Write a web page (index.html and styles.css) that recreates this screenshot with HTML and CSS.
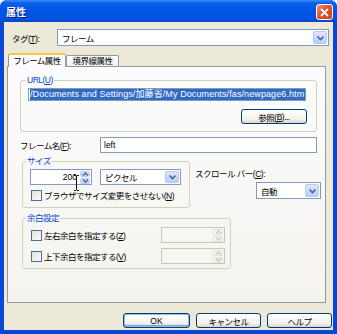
FILE: index.html
```html
<!DOCTYPE HTML>
<html>
	<head>
		<meta charset="utf-8">
		<title>属性</title>
		<link rel="stylesheet" href="styles.css">
	</head>
	<body>
		<div class="window">
			<div class="titlebar">
				<span class="title">属性</span>
				<span class="close">
					<svg width="9" height="9" viewBox="0 0 9 9"><path d="M1 1L8 8M8 1L1 8" stroke="#fff" stroke-width="1.8"/></svg>
				</span>
			</div>
			<div class="client">
				<div class="tag-row">
					<label class="tag-label">タグ(<u>T</u>):</label>
					<div class="combo tag-combo">
						<span class="combo-text">フレーム</span>
						<span class="drop"><svg width="9" height="6" viewBox="0 0 9 6"><path d="M1.5 1.5L4.5 4.5L7.5 1.5" fill="none" stroke="#4d6185" stroke-width="1.6"/></svg></span>
					</div>
				</div>
				<div class="tabs">
					<span class="tab active">フレーム属性</span>
					<span class="tab">境界線属性</span>
				</div>
				<div class="panel">
					<fieldset class="group url-group">
						<legend>URL(<u>U</u>)</legend>
						<div class="textbox url-box"><span class="sel">/Documents and Settings/加藤省/My Documents/fas/newpage6.htm</span></div>
						<div class="browse-row"><span class="btn browse">参照(<u>B</u>)...</span></div>
					</fieldset>
					<div class="name-row">
						<label class="name-label">フレーム名(<u>F</u>):</label>
						<div class="textbox name-box latin">left</div>
					</div>
					<div class="mid-row">
						<fieldset class="group size-group">
							<legend>サイズ</legend>
							<div class="size-row">
								<div class="spin size-spin">
									<span class="spin-val latin">200</span>
									<span class="spin-btns">
										<span class="arrow"><svg width="7" height="4" viewBox="0 0 7 4"><path d="M1 3.5L3.5 1L6 3.5" fill="none" stroke="#4d6185" stroke-width="1.3"/></svg></span>
										<span class="arrow"><svg width="7" height="4" viewBox="0 0 7 4"><path d="M1 0.5L3.5 3L6 0.5" fill="none" stroke="#4d6185" stroke-width="1.3"/></svg></span>
									</span>
								</div>
								<div class="combo unit-combo">
									<span class="combo-text">ピクセル</span>
									<span class="drop"><svg width="9" height="6" viewBox="0 0 9 6"><path d="M1.5 1.5L4.5 4.5L7.5 1.5" fill="none" stroke="#4d6185" stroke-width="1.6"/></svg></span>
								</div>
							</div>
							<div class="check-row">
								<span class="checkbox"></span>
								<span>ブラウザでサイズ変更をさせない(<u>N</u>)</span>
							</div>
						</fieldset>
						<div class="scroll-col">
							<label class="scroll-label">スクロール バー(<u>C</u>):</label>
							<div class="combo scroll-combo">
								<span class="combo-text">自動</span>
								<span class="drop"><svg width="9" height="6" viewBox="0 0 9 6"><path d="M1.5 1.5L4.5 4.5L7.5 1.5" fill="none" stroke="#4d6185" stroke-width="1.6"/></svg></span>
							</div>
						</div>
					</div>
					<fieldset class="group margin-group">
						<legend>余白設定</legend>
						<div class="margin-row">
							<div class="check-row inline">
								<span class="checkbox"></span>
								<span>左右余白を指定する(<u>Z</u>)</span>
							</div>
							<div class="spin off">
								<span class="spin-val"></span>
								<span class="spin-btns">
									<span class="arrow"><svg width="7" height="4" viewBox="0 0 7 4"><path d="M1 3.5L3.5 1L6 3.5" fill="none" stroke="#c6c4b8" stroke-width="1.2"/></svg></span>
									<span class="arrow"><svg width="7" height="4" viewBox="0 0 7 4"><path d="M1 0.5L3.5 3L6 0.5" fill="none" stroke="#c6c4b8" stroke-width="1.2"/></svg></span>
								</span>
							</div>
						</div>
						<div class="margin-row">
							<div class="check-row inline">
								<span class="checkbox"></span>
								<span>上下余白を指定する(<u>V</u>)</span>
							</div>
							<div class="spin off">
								<span class="spin-val"></span>
								<span class="spin-btns">
									<span class="arrow"><svg width="7" height="4" viewBox="0 0 7 4"><path d="M1 3.5L3.5 1L6 3.5" fill="none" stroke="#c6c4b8" stroke-width="1.2"/></svg></span>
									<span class="arrow"><svg width="7" height="4" viewBox="0 0 7 4"><path d="M1 0.5L3.5 3L6 0.5" fill="none" stroke="#c6c4b8" stroke-width="1.2"/></svg></span>
								</span>
							</div>
						</div>
					</fieldset>
				</div>
				<div class="buttons">
					<span class="btn default latin">OK</span>
					<span class="btn">キャンセル</span>
					<span class="btn">ヘルプ</span>
				</div>
			</div>
			<svg class="ibeam" width="7" height="16" viewBox="0 0 7 16"><path d="M1 0.5H3M4 0.5H6M3.5 1V15M1 15.5H3M4 15.5H6" fill="none" stroke="#111" stroke-width="1"/></svg>
		</div>
	</body>
</html>
```

FILE: styles.css
```css
body{
	margin: 0;
	font-family: "Liberation Sans", "Noto Sans CJK JP", sans-serif;
	font-size: 8.5px;
	letter-spacing: -0.5px;
	color: #000;
}
u{
	text-decoration: underline;
}
.latin{
	letter-spacing: 0;
}
.window{
	position: relative;
	width: 337px;
	height: 334px;
	display: flex;
	flex-direction: column;
	background: #0b47d6;
	border-radius: 7px 7px 0 0;
	overflow: hidden;
}
.titlebar{
	height: 22px;
	display: flex;
	align-items: center;
	justify-content: space-between;
	padding: 0 4px 0 6px;
	background: linear-gradient(#3c8cff 0, #0a60ec 3px, #0055e5 45%, #0052df 85%, #0a43c8 100%);
}
.title{
	color: #fff;
	font-weight: bold;
	font-size: 10px;
	letter-spacing: 0;
	text-shadow: 1px 1px #0a1a7a;
}
.close{
	width: 17px;
	height: 16px;
	margin-top: 2px;
	box-sizing: border-box;
	border: 1px solid #fff;
	border-radius: 3px;
	background: linear-gradient(135deg, #f19478 0, #e0552e 45%, #c8401c 100%);
	display: flex;
	align-items: center;
	justify-content: center;
}
.client{
	flex: 1;
	margin: 0 4px 4px;
	background: #ece9d8;
	padding: 7px 0 0 3px;
	display: flex;
	flex-direction: column;
}
.tag-row{
	display: flex;
	align-items: center;
	height: 17px;
}
.tag-label{
	width: 45px;
	padding-left: 5px;
}
.combo{
	box-sizing: border-box;
	display: flex;
	align-items: center;
	justify-content: space-between;
	background: #fff;
	border: 1px solid #7f9db9;
	padding: 1px 1px 1px 4px;
}
.tag-combo{
	width: 272px;
	height: 17px;
}
.drop{
	width: 14px;
	height: 100%;
	box-sizing: border-box;
	border: 1px solid #b7c9f5;
	border-radius: 2px;
	background: linear-gradient(#dde7fe, #b8cdfb);
	display: flex;
	align-items: center;
	justify-content: center;
}
.tabs{
	display: flex;
	align-items: flex-end;
	height: 13px;
	margin-top: 7px;
	padding-left: 1px;
	position: relative;
	z-index: 1;
}
.tab{
	box-sizing: border-box;
	height: 11px;
	width: 53px;
	border: 1px solid #919b9c;
	border-bottom: none;
	border-radius: 2px 2px 0 0;
	background: linear-gradient(#fefefe, #f0efe8);
	display: flex;
	align-items: center;
	justify-content: center;
	line-height: 1;
}
.tab.active{
	width: 58px;
	height: 14px;
	margin-bottom: -1px;
	border-top: 2px solid #ffc83c;
	background: #fcfcfe;
}
.panel{
	box-sizing: border-box;
	width: 319px;
	height: 237px;
	border: 1px solid #919b9c;
	background: linear-gradient(#fcfcfe, #f4f3ee);
	display: flex;
	flex-direction: column;
	align-items: flex-start;
}
.group{
	box-sizing: border-box;
	margin: 0;
	padding: 0 0 0 5px;
	border: 1px solid #d0d0bf;
	border-radius: 3px;
	display: flex;
	flex-direction: column;
	align-items: flex-start;
}
.group legend{
	color: #0046d5;
	padding: 0 1px;
	line-height: 11px;
}
.url-group{
	width: 297px;
	height: 57px;
	margin: 8px 0 0 12px;
}
.textbox{
	box-sizing: border-box;
	background: #fff;
	border: 1px solid #7f9db9;
	display: flex;
	align-items: center;
	padding: 0 3px;
	white-space: nowrap;
	overflow: hidden;
}
.url-box{
	width: 278px;
	height: 13px;
	margin: 2px 0 0 2px;
	padding: 0 1px;
}
.sel{
	background: #316ac5;
	color: #fff;
	font-size: 9px;
	letter-spacing: 0.1px;
	line-height: 11px;
	padding-right: 1px;
}
.browse-row{
	align-self: stretch;
	display: flex;
	justify-content: flex-end;
	padding-right: 9px;
	margin-top: 8px;
}
.btn{
	box-sizing: border-box;
	width: 65px;
	height: 15px;
	border: 1px solid #003c74;
	border-radius: 3px;
	background: linear-gradient(#ffffff, #f3f2ec 70%, #d9d6c8);
	display: flex;
	align-items: center;
	justify-content: center;
}
.browse{
	width: 66px;
}
.btn.default{
	width: 67px;
	box-shadow: inset 0 0 0 1px #9bb9ef, inset 0 -1px 0 1px #7ba2e7;
}
.name-row{
	display: flex;
	align-items: center;
	margin: 5px 0 0 12px;
}
.name-label{
	width: 80px;
}
.name-box{
	width: 217px;
	height: 16px;
}
.mid-row{
	display: flex;
	align-items: flex-start;
	margin: 3px 0 0 14px;
}
.size-group{
	width: 168px;
	height: 52px;
	padding-left: 3px;
}
.size-row{
	display: flex;
	align-items: center;
	gap: 8px;
	margin: 2px 0 0 4px;
}
.spin{
	box-sizing: border-box;
	display: flex;
	align-items: stretch;
	background: #fff;
	border: 1px solid #7f9db9;
	padding: 1px;
}
.size-spin{
	width: 62px;
	height: 16px;
}
.spin-val{
	flex: 1;
	text-align: right;
	padding-right: 3px;
	line-height: 12px;
}
.spin-btns{
	width: 10px;
	display: flex;
	flex-direction: column;
	gap: 1px;
}
.arrow{
	flex: 1;
	box-sizing: border-box;
	border: 1px solid #b7c9f5;
	border-radius: 2px;
	background: linear-gradient(#dde7fe, #b8cdfb);
	display: flex;
	align-items: center;
	justify-content: center;
}
.spin.off{
	width: 64px;
	height: 16px;
	background: #f7f6f1;
	border-color: #c9c7ba;
}
.spin.off .arrow{
	border-color: #e2e0d6;
	background: #f7f6f1;
}
.unit-combo{
	width: 81px;
	height: 16px;
}
.check-row{
	display: flex;
	align-items: center;
	gap: 2px;
	margin: 4px 0 0 5px;
}
.check-row.inline{
	margin: 0;
}
.checkbox{
	box-sizing: border-box;
	width: 11px;
	height: 11px;
	border: 1px solid #4a6f98;
	background: linear-gradient(135deg, #e2e2db, #fbfbf9);
}
.scroll-col{
	width: 126px;
	margin: 13px 0 0 5px;
	display: flex;
	flex-direction: column;
	align-items: flex-end;
}
.scroll-label{
	align-self: flex-start;
	line-height: 11px;
}
.scroll-combo{
	width: 65px;
	height: 17px;
	margin-top: 2px;
}
.margin-group{
	width: 209px;
	height: 56px;
	margin: 5px 0 0 14px;
	padding: 0 5px 0 3px;
}
.margin-row{
	align-self: stretch;
	display: flex;
	align-items: center;
	justify-content: space-between;
	padding-left: 5px;
	margin-top: 3px;
}
.margin-row + .margin-row{
	margin-top: 5px;
}
.buttons{
	display: flex;
	justify-content: flex-end;
	gap: 6px;
	margin-top: 10px;
	padding-right: 1px;
}
.ibeam{
	position: absolute;
	left: 73px;
	top: 175px;
}
```
